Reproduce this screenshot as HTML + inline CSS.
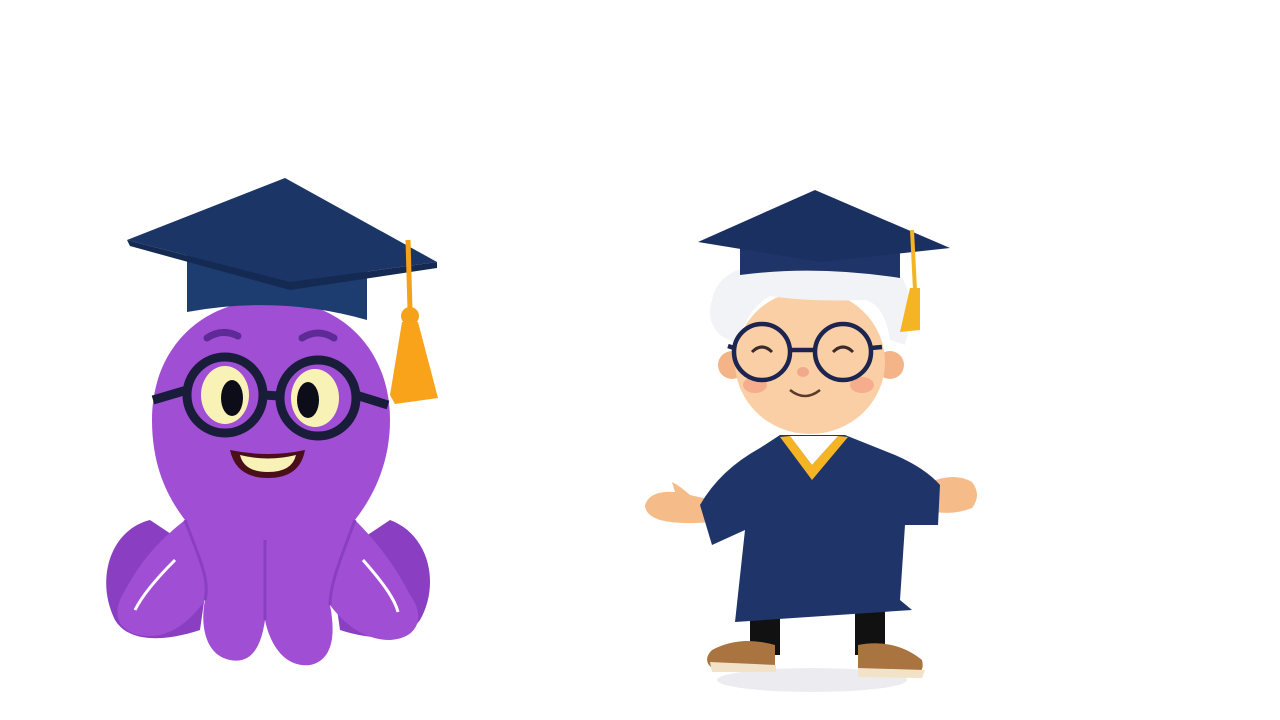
<!DOCTYPE html>
<html><head><style>html,body{margin:0;padding:0;background:#fff;width:1280px;height:720px;overflow:hidden}</style></head>
<body>
<svg width="1280" height="720" viewBox="0 0 1280 720" xmlns="http://www.w3.org/2000/svg">
<rect width="1280" height="720" fill="#fff"/>
<!-- OCTOPUS -->
<g>
  <path d="M150,520 C110,530 95,580 115,620 C130,645 170,640 200,630 L210,560 Z" fill="#8a3fc2"/>
  <path d="M390,520 C430,535 440,585 420,620 C405,642 370,640 340,630 L330,560 Z" fill="#8a3fc2"/>
  <path d="M271,300 C200,300 152,350 152,420 C152,470 170,500 185,520 C160,540 140,560 120,600 C110,625 130,640 160,635 C180,630 195,615 205,600 C200,625 205,655 230,660 C255,665 262,640 265,620 C270,645 285,668 310,665 C335,660 335,630 330,605 C345,625 365,640 390,640 C420,638 425,615 410,595 C395,565 375,540 355,520 C372,498 390,465 390,420 C390,350 342,300 271,300 Z" fill="#a04fd4"/>
  <path d="M175,560 C150,585 140,600 135,610" stroke="#fff" stroke-width="3" fill="none"/>
  <path d="M363,560 C385,585 395,600 398,612" stroke="#fff" stroke-width="3" fill="none"/>
  <path d="M185,520 C200,560 210,580 205,600" stroke="#8a3fc2" stroke-width="3" fill="none"/>
  <path d="M355,520 C340,560 330,585 330,605" stroke="#8a3fc2" stroke-width="3" fill="none"/>
  <path d="M265,540 L265,620" stroke="#8a3fc2" stroke-width="3" fill="none"/>
  <path d="M207,338 Q222,328 238,336" stroke="#5e2a96" stroke-width="7" fill="none" stroke-linecap="round"/>
  <path d="M302,338 Q318,328 334,338" stroke="#5e2a96" stroke-width="7" fill="none" stroke-linecap="round"/>
  <ellipse cx="225" cy="395" rx="24" ry="29" fill="#f8f2b6"/>
  <ellipse cx="232" cy="398" rx="11" ry="18" fill="#0d0d1a"/>
  <ellipse cx="315" cy="398" rx="24" ry="29" fill="#f8f2b6"/>
  <ellipse cx="308" cy="400" rx="11" ry="18" fill="#0d0d1a"/>
  <circle cx="225" cy="395" r="38" fill="none" stroke="#1a1d3a" stroke-width="9"/>
  <circle cx="318" cy="398" r="38" fill="none" stroke="#1a1d3a" stroke-width="9"/>
  <path d="M263,395 L280,396 M187,390 L153,400 M356,395 L388,405" stroke="#1a1d3a" stroke-width="9" fill="none"/>
  <path d="M230,450 Q268,458 305,450 Q300,478 268,478 Q236,478 230,450 Z" fill="#4a0f18"/>
  <path d="M240,455 Q268,462 296,455 Q292,472 268,472 Q244,472 240,455 Z" fill="#f8f2b6"/>
  <path d="M187,255 L367,255 L367,320 Q280,295 187,312 Z" fill="#1d3c70"/>
  <polygon points="285,178 127,240 290,282 437,262" fill="#1a3566"/>
  <polygon points="127,240 290,282 437,262 437,268 290,290 130,246" fill="#142a52"/>
  <path d="M408,240 L410,310" stroke="#f5a21a" stroke-width="5"/>
  <circle cx="410" cy="316" r="9" fill="#f5a21a"/>
  <path d="M402,322 L418,322 L438,398 L395,404 L390,395 Z" fill="#f8a31a"/>
</g>
<!-- GRADUATE -->
<g>
  <ellipse cx="812" cy="680" rx="95" ry="12" fill="#ececf0"/>
  <rect x="750" y="610" width="30" height="45" fill="#111"/>
  <rect x="855" y="610" width="30" height="45" fill="#111"/>
  <path d="M712,650 Q740,635 775,645 L775,668 L712,668 Q702,660 712,650 Z" fill="#a9743f"/>
  <path d="M710,662 L776,665 L776,672 L712,672 Z" fill="#f1e2c8"/>
  <path d="M858,645 Q895,638 922,660 Q925,672 915,675 L858,672 Z" fill="#a9743f"/>
  <path d="M858,668 L925,670 L922,678 L858,677 Z" fill="#f1e2c8"/>
  <!-- hands -->
  <path d="M645,505 Q650,490 675,492 L672,482 Q680,486 690,495 L712,500 L710,522 Q680,525 660,520 Q645,515 645,505 Z" fill="#f5bc8a"/>
  <path d="M930,482 Q955,472 972,482 Q982,495 972,508 Q955,515 935,512 Z" fill="#f5bc8a"/>
  <!-- gown -->
  <path d="M780,435 L845,435 L895,455 Q925,468 940,485 L938,525 L905,525 L900,600 L912,610 L735,622 L745,530 L712,545 L700,505 Q720,470 760,448 Z" fill="#1f3569"/>
  <path d="M780,437 L812,480 L848,437 L838,436 L812,465 L790,436 Z" fill="#f5b423"/>
  <path d="M790,436 L812,465 L838,436 Z" fill="#fff"/>
  <circle cx="732" cy="365" r="14" fill="#f5b488"/>
  <circle cx="890" cy="365" r="14" fill="#f5b488"/>
  <ellipse cx="810" cy="362" rx="75" ry="72" fill="#fbcfa5"/>
  <ellipse cx="755" cy="385" rx="12" ry="8" fill="#f5ad8e"/>
  <ellipse cx="862" cy="385" rx="12" ry="8" fill="#f5ad8e"/>
  <path d="M712,300 Q720,262 780,265 Q850,258 900,275 Q918,300 905,345 L890,340 Q885,305 865,300 Q810,302 770,296 Q745,310 738,345 L720,335 Q705,320 712,300 Z" fill="#f2f3f7"/>
  <path d="M752,352 Q762,342 772,352" stroke="#3a2a2a" stroke-width="3" fill="none"/>
  <path d="M833,352 Q843,342 853,352" stroke="#3a2a2a" stroke-width="3" fill="none"/>
  <ellipse cx="803" cy="372" rx="6" ry="5" fill="#f0a98a"/>
  <path d="M790,390 Q805,402 820,390" stroke="#5a3a2a" stroke-width="2.5" fill="none"/>
  <circle cx="762" cy="352" r="28" fill="none" stroke="#1c2550" stroke-width="4.5"/>
  <circle cx="843" cy="352" r="28" fill="none" stroke="#1c2550" stroke-width="4.5"/>
  <path d="M790,350 L815,350 M734,348 L728,346 M871,348 L882,347" stroke="#1c2550" stroke-width="4.5"/>
  <path d="M740,245 Q815,215 900,245 L900,278 Q815,265 740,275 Z" fill="#1f3569"/>
  <polygon points="815,190 698,242 820,262 950,248" fill="#1a3060"/>
  <path d="M912,230 L915,290" stroke="#f5b423" stroke-width="4"/>
  <path d="M910,288 L920,288 L920,330 L900,332 Z" fill="#f5b423"/>
</g>
</svg>
</body></html>
